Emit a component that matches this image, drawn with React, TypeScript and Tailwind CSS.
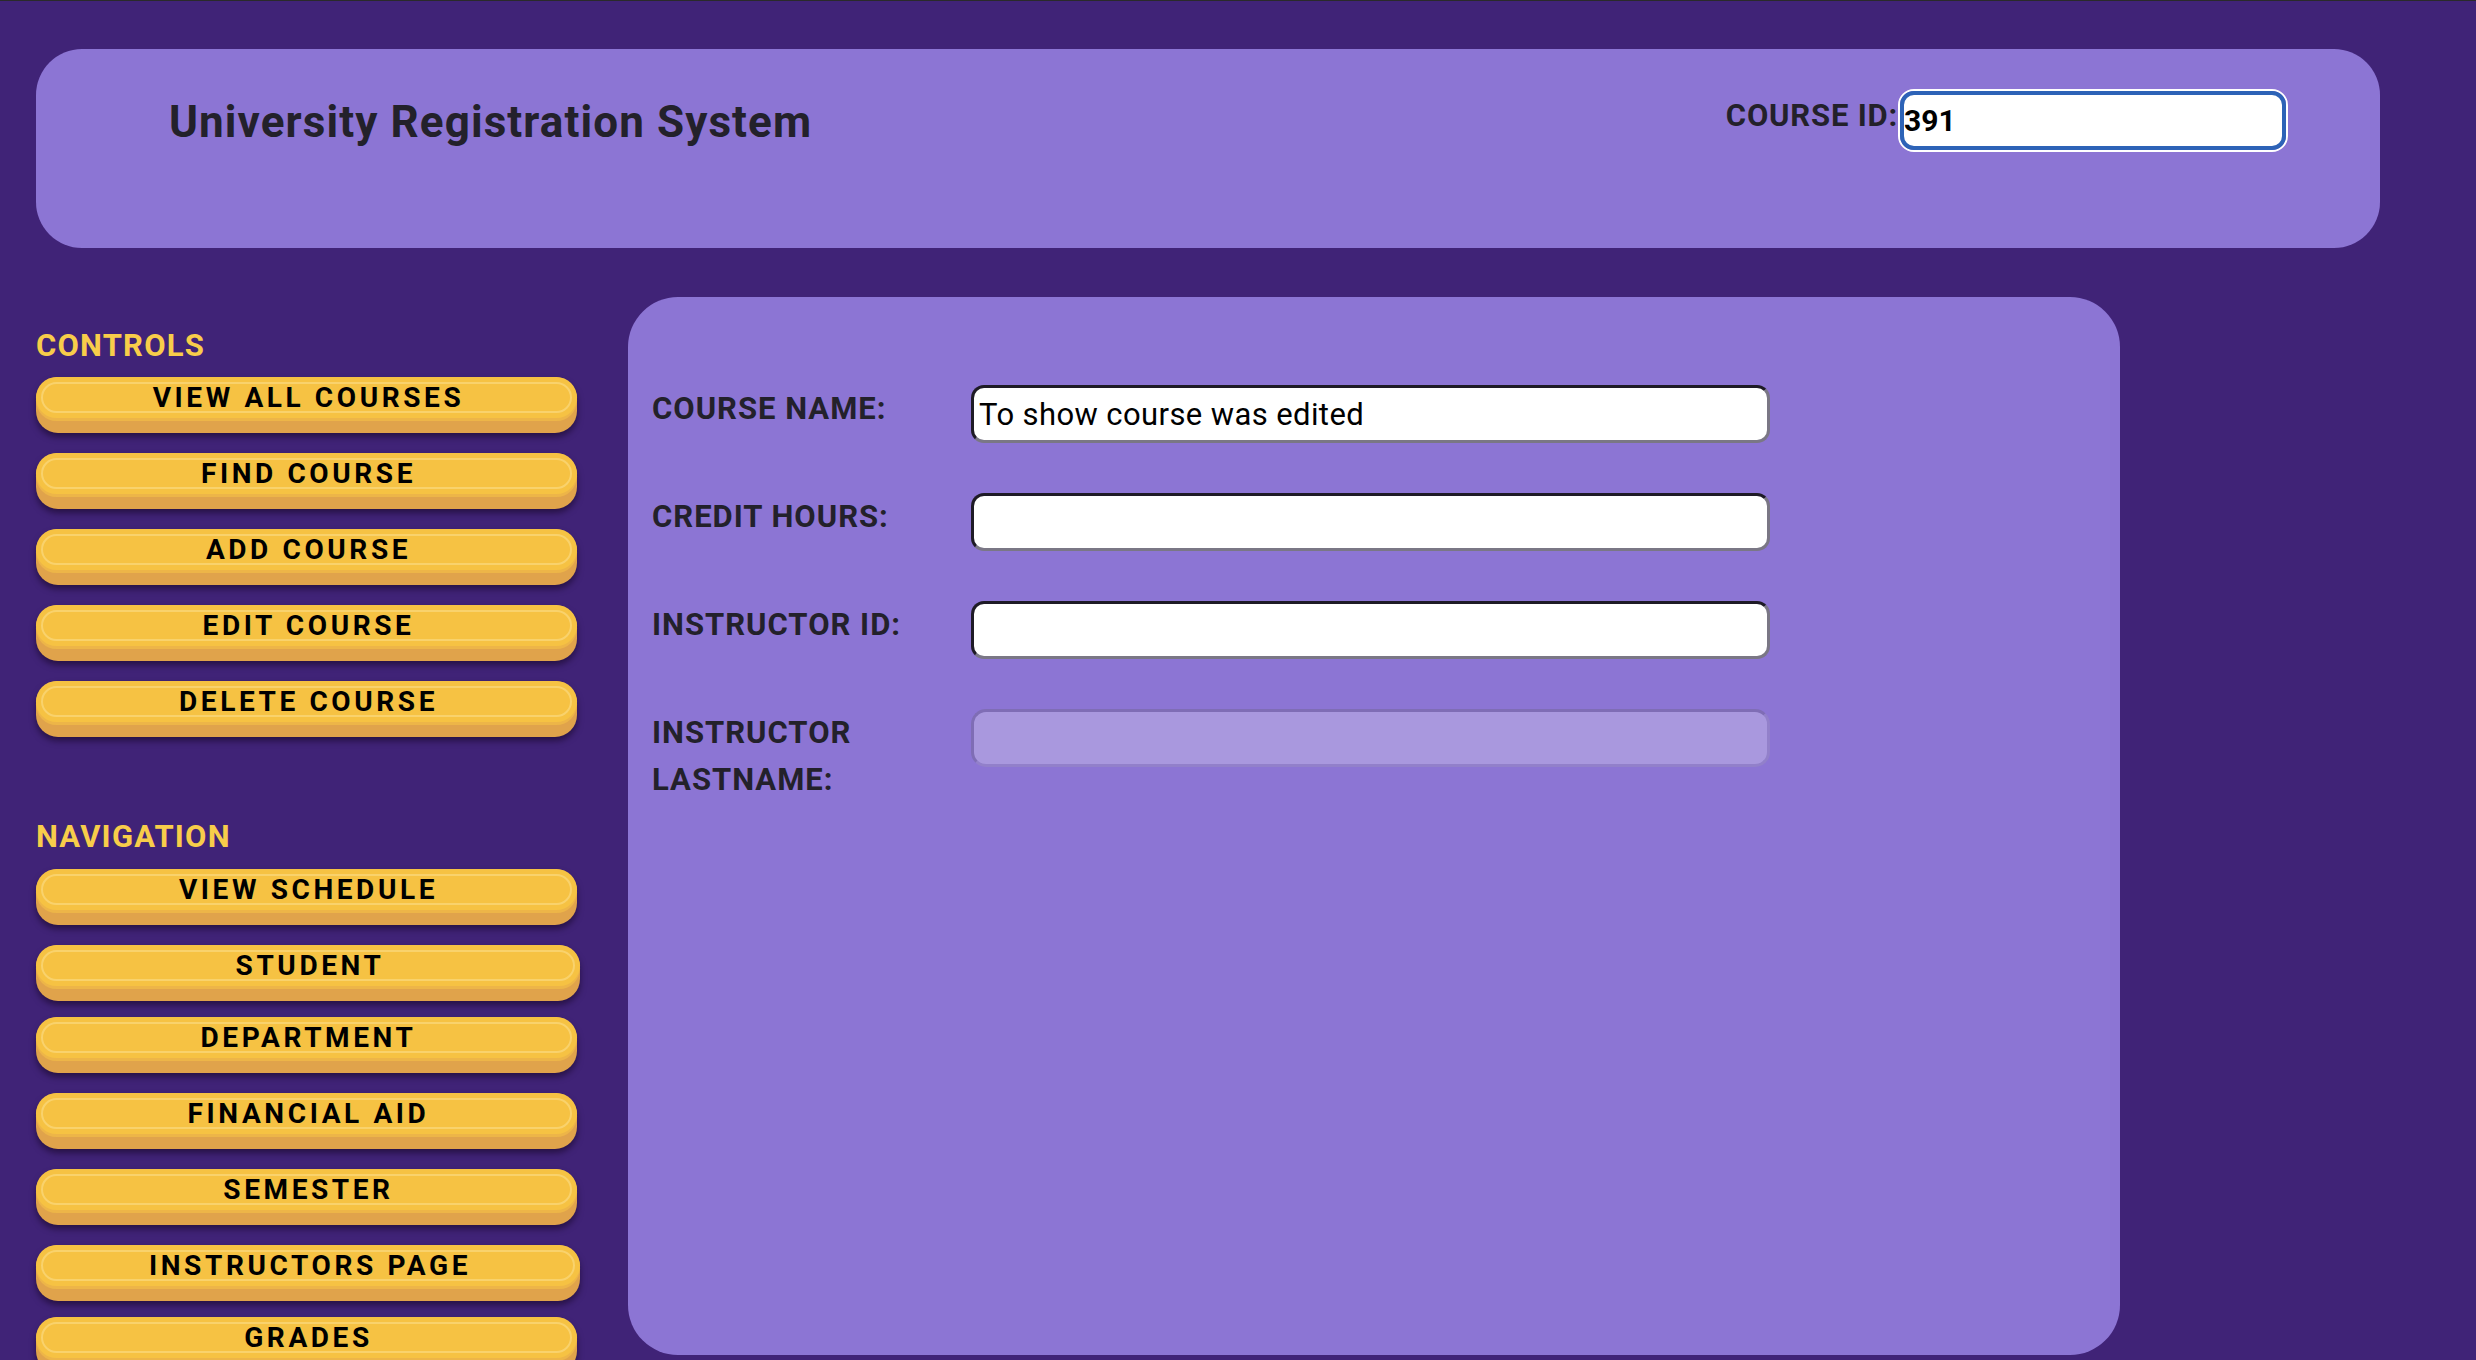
import React from "react";

const controls = ["VIEW ALL COURSES", "FIND COURSE", "ADD COURSE", "EDIT COURSE", "DELETE COURSE"];
const navigation = [
  { label: "VIEW SCHEDULE", wide: false },
  { label: "STUDENT", wide: true },
  { label: "DEPARTMENT", wide: false },
  { label: "FINANCIAL AID", wide: false },
  { label: "SEMESTER", wide: false },
  { label: "INSTRUCTORS PAGE", wide: true },
  { label: "GRADES", wide: false },
];

function SideButton({ label, wide }: { label: string; wide?: boolean }) {
  return (
    <button
      className={
        (wide ? "w-[544px] mb-[16px] " : "w-[541px] mb-[20px] ") +
        "h-[56px] shrink-0 rounded-[22px] bg-[#e0a34b] shadow-[0_4px_6px_rgba(18,4,30,0.55)] flex flex-col p-0 cursor-pointer"
      }
    >
      <div className="h-[41px] w-full rounded-[22px] bg-[#f6c243] p-[5px] shadow-[0_3px_0_#edb548]">
        <div className="h-full rounded-[18px] border-2 border-[#f9d26c] flex items-center justify-center pl-[4px] text-[28px] font-bold tracking-[3.6px] text-black">
          {label}
        </div>
      </div>
    </button>
  );
}

function Heading({ children, className = "" }: { children: React.ReactNode; className?: string }) {
  return (
    <h2 className={"text-[31px] leading-[36px] font-bold tracking-[1.2px] text-[#f8cd4a] mb-[13px] " + className}>
      {children}
    </h2>
  );
}

function Field({ label, value, disabled }: { label: string; value?: string; disabled?: boolean }) {
  return (
    <>
      <label className="text-[31px] leading-[47px] font-bold tracking-[1px] text-[#23212b] pr-[20px]">
        {label}
      </label>
      <input
        readOnly
        value={value ?? ""}
        disabled={disabled}
        className={
          disabled
            ? "w-[799px] h-[58px] rounded-[15px] border-[3px] border-[#7f6db5] border-b-[#9280ca] border-r-[#9280ca] bg-[#a998de] px-[6px] text-[30px] outline-none"
            : "w-[799px] h-[58px] rounded-[13px] border-[3px] border-t-[#1e1b26] border-l-[#1e1b26] border-b-[#7a7785] border-r-[#7a7785] bg-white px-[5px] text-[31px] tracking-[0.4px] text-black outline-none"
        }
      />
    </>
  );
}

export default function App() {
  return (
    <div className="h-[1360px] overflow-hidden bg-[#402377] font-['Roboto','Open_Sans',sans-serif] border-t border-[#2a2a2a]">
      <div className="pt-[48px] pl-[36px]">
        <header className="w-[2344px] h-[199px] rounded-[46px] bg-[#8c75d4] flex items-start justify-between pl-[133px] pr-[92px] pt-[40px]">
          <h1 className="mt-[8px] text-[44px] leading-[50px] font-bold text-[#23212b] tracking-[1.1px]">
            University Registration System
          </h1>
          <div className="flex items-start">
            <span className="mt-[9px] text-[31px] leading-[36px] font-bold tracking-[0.8px] text-[#23212b]">COURSE ID:</span>
            <div className="rounded-[16px] border-2 border-white">
              <input
                readOnly
                value="391"
                className="w-[386px] h-[59px] rounded-[14px] border-[4px] border-[#2d63b7] bg-white px-0 text-[30px] font-bold text-black outline-none"
              />
            </div>
          </div>
        </header>

        <div className="flex items-start mt-[49px]">
          <aside className="w-[592px] shrink-0 pt-[31px] flex flex-col items-start">
            <Heading>CONTROLS</Heading>
            {controls.map((c) => (
              <SideButton key={c} label={c} />
            ))}
            <Heading className="mt-[62px] !mb-[14px]">NAVIGATION</Heading>
            {navigation.map((n) => (
              <SideButton key={n.label} label={n.label} wide={n.wide} />
            ))}
          </aside>

          <main className="w-[1492px] h-[1058px] shrink-0 rounded-[50px] bg-[#8c75d4] pt-[88px] pl-[24px]">
            <div className="grid grid-cols-[319px_799px] gap-y-[50px] items-start">
              <Field label="COURSE NAME:" value="To show course was edited" />
              <Field label="CREDIT HOURS:" />
              <Field label="INSTRUCTOR ID:" />
              <Field label="INSTRUCTOR LASTNAME:" disabled />
            </div>
          </main>
        </div>
      </div>
    </div>
  );
}
